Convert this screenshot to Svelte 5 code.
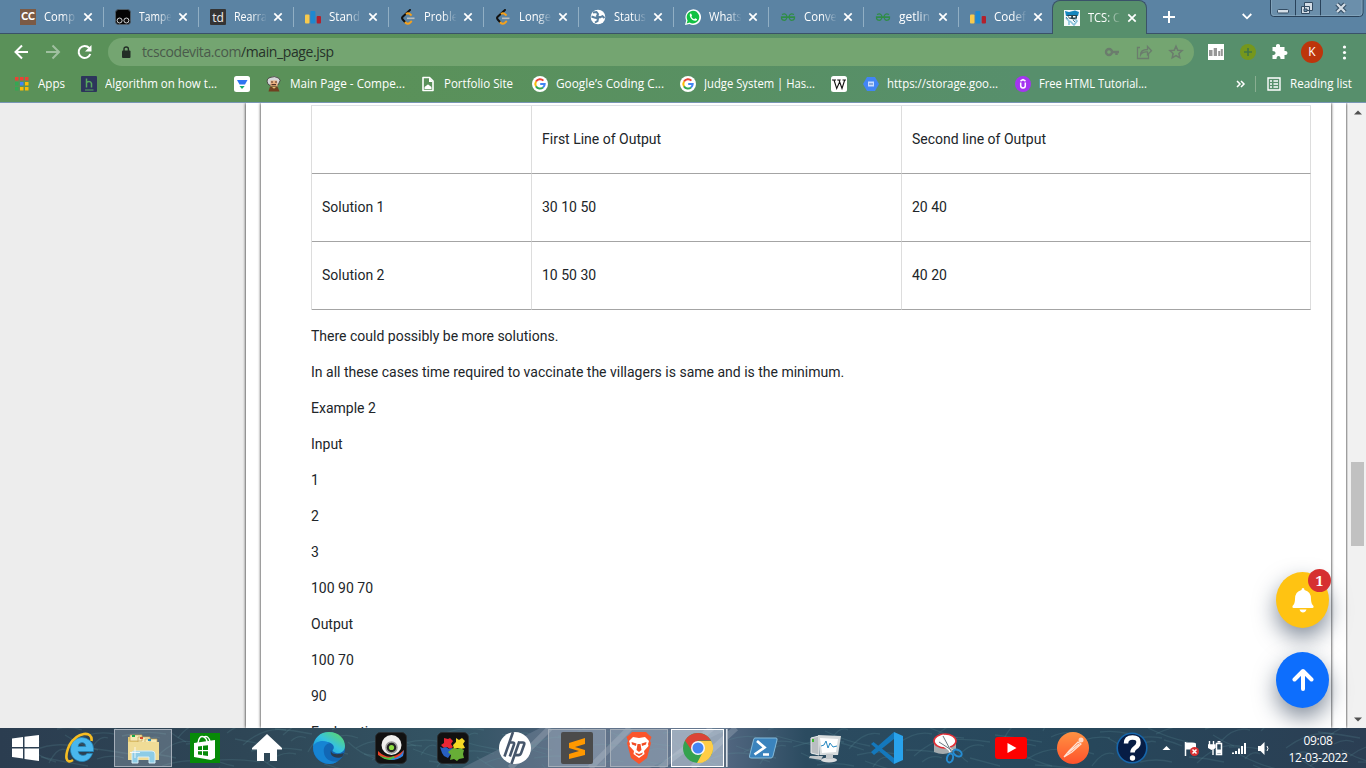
<script>
  const tabs = [
    { icon: 'cc', title: 'Comp', t: 31 },
    { icon: 'tamper', title: 'Tampe', t: 33 },
    { icon: 'td', title: 'Rearra', t: 33 },
    { icon: 'bars', title: 'Stand', t: 31 },
    { icon: 'leet', title: 'Proble', t: 34 },
    { icon: 'leet', title: 'Longe', t: 32 },
    { icon: 'globe', title: 'Status', t: 32 },
    { icon: 'whats', title: 'Whats', t: 33 },
    { icon: 'gfg', title: 'Conve', t: 33 },
    { icon: 'gfg', title: 'getlin', t: 31 },
    { icon: 'bars', title: 'Codef', t: 32 },
    { icon: 'robot', title: 'TCS: C', t: 32, active: true }
  ];

  const bookmarks = [
    { icon: 'apps', label: 'Apps', w: 67, t: 27 },
    { icon: 'h', label: 'Algorithm on how t...', w: 153, t: 112 },
    { icon: 'drop', label: '', w: 32, t: 0 },
    { icon: 'einstein', label: 'Main Page - Compe...', w: 154, t: 115 },
    { icon: 'doc', label: 'Portfolio Site', w: 112, t: 69 },
    { icon: 'google', label: 'Google’s Coding C...', w: 148, t: 108 },
    { icon: 'google', label: 'Judge System | Has...', w: 151, t: 111 },
    { icon: 'wiki', label: '', w: 32, t: 0 },
    { icon: 'cloud', label: 'https://storage.goo...', w: 152, t: 111 },
    { icon: 'udemy', label: 'Free HTML Tutorial...', w: 150, t: 108 }
  ];

  const appDots = ['#ea4335', '#ea4335', '#ea4335', '#34a853', '#4285f4', '#fbbc05', '#34a853', '#fbbc05', '#fbbc05'];

  const rows = [
    ['', 'First Line of Output', 'Second line of Output'],
    ['Solution 1', '30 10 50', '20 40'],
    ['Solution 2', '10 50 30', '40 20']
  ];

  const lines = [
    'There could possibly be more solutions.',
    'In all these cases time required to vaccinate the villagers is same and is the minimum.',
    'Example 2', 'Input', '1', '2', '3', '100 90 70', 'Output', '100 70', '90', 'Explanation'
  ];

  const tasks = [
    'ie', 'explorer', 'store', 'home', 'edge', 'cam', 'puzzle', 'hp', 'sublime',
    'brave', 'chrome', 'powershell', 'monitor', 'vscode', 'snip', 'youtube', 'postman', 'help'
  ];
  const open = { explorer: 'open', sublime: 'open', brave: 'open', chrome: 'open current' };

  const grass = Array.from({ length: 150 }, (_, i) => {
    const x = (i * 97) % 1366;
    const y = (i * 31) % 40;
    const dx = 14 + ((i * 13) % 38);
    const dy = ((i * 17) % 36) - 18;
    return `M${x} ${y}q${dx / 2} ${dy - 4} ${dx} ${dy}`;
  });
</script>

{#snippet small(name)}
  <svg class="fav" viewBox="0 0 16 16" width="16" height="16">
    {#if name === 'cc'}
      <rect width="16" height="16" fill="#7b5a45" /><text x="8" y="11.3" text-anchor="middle" font-size="10.5" font-weight="900" font-family="Lato" fill="#fff">CC</text>
    {:else if name === 'tamper'}
      <rect x=".5" y=".5" width="15" height="15" rx="3" fill="#050505" stroke="#4c5b66" /><circle cx="4.600" cy="11.500" r="2.500" fill="#111" stroke="#d5d8da" /><circle cx="11.400" cy="11.500" r="2.500" fill="#111" stroke="#d5d8da" />
    {:else if name === 'td'}
      <rect width="16" height="16" rx="1" fill="#343434" /><text x="8" y="12.5" text-anchor="middle" font-size="12" font-family="Noto Sans" fill="#e6e6e6">td</text>
    {:else if name === 'bars'}
      <rect y="5.5" width="4.5" height="9" rx="1" fill="#f8ca4d" /><rect x="5.4" y="2" width="5" height="12.5" rx="1" fill="#1e88d0" /><rect x="11.7" y="7" width="4.3" height="7.5" rx="1" fill="#b3202c" />
    {:else if name === 'leet'}
      <path d="M10 1 2.700 7.700q-1.300 1.400 0 2.800L5 13" fill="none" stroke="#111" stroke-width="2" stroke-linecap="round" /><path d="M5 13q2.500 3 5 .8l1.800-1.700M6 5.200q2-1.800 4 0l1.600 1.400" fill="none" stroke="#f5a11c" stroke-width="2" /><path d="M7 9.300h7.500" stroke="#b8bec1" stroke-width="1.600" />
    {:else if name === 'globe'}
      <circle cx="8" cy="8" r="7.300" fill="#fff" /><path d="M3 3.500 6.500 3l1.500 2-1 2 3 1.500 2.500-1.300L14.500 9M1.500 7.500l3 1 3.500 1-.5 2.500L5 13.500" fill="none" stroke="#597f9e" stroke-width="2" />
    {:else if name === 'whats'}
      <path d="M0 16 1.200 11.500A7.800 7.800 0 1 1 4.500 15Z" fill="#fff" /><path d="m1.600 14.400 1-3A6.300 6.300 0 1 1 4.700 13.500Z" fill="#12c143" /><path d="M5.300 4.500c-1.700 1.600.8 7.300 5.200 7.300 1.500-.2 1.800-1.500 1.300-1.900l-1.700-.7-.9 1c-1.400-.4-2.300-1.400-2.800-2.500l.6-1-.7-1.900Z" fill="#fff" />
    {:else if name === 'gfg'}
      <path d="M2 5.500q4.500-1.800 5 2.500-.7 3.800-3.500 3.200Q1.500 11 1.500 8.200h13q0 2.800-2 3Q9.700 11.800 9 8q.5-4.300 5-2.500" fill="none" stroke="#2f8d46" stroke-width="1.300" /><path d="M1 8.200h14" stroke="#2f8d46" stroke-width="1.300" />
    {:else if name === 'robot'}
      <path fill="#f7fafb" d="M0 0h16v16H0z" /><path d="m1 1 4 1 6-1.500 4 1.500-1 4H2Z" fill="#1685bd" /><path d="M3 5h10v3.500l-3 1-5-1Z" fill="#29454f" /><path d="M4.500 6h2.700v1.500H4.500zm4.500 0h2.500v1.500H9z" fill="#fff" /><path d="m2 8 3 3v4M11 9l2 2-3 4-4-4" fill="none" stroke="#8bc3dc" stroke-width="1.700" /><path d="m2 7 1.500 2M9 10l2 2" stroke="#397a94" />
    {:else if name === 'apps'}
      {#each appDots as c, i}
        <rect x={1 + (i % 3) * 5} y={1 + Math.floor(i / 3) * 5} width="3.5" height="3.5" fill={c} />
      {/each}
    {:else if name === 'h'}
      <rect width="16" height="16" rx="1" fill="#2d355b" /><path d="M5.500 2.500v9M5.500 7q.5-1.500 2.500-1.500t2.500 2v4" fill="none" stroke="#57a85e" stroke-width="1.500" /><path d="M4 14h8.500" stroke="#57a85e" />
    {:else if name === 'drop'}
      <rect width="16" height="16" rx="2.500" fill="#fff" /><path d="M3 4h10.500L11 8.500H5.500Z" fill="#2e74f2" /><path d="M5.500 10h5.200L8 13Z" fill="#16aa6d" />
    {:else if name === 'einstein'}
      <path d="M2 8Q-.5 3 4 1.500 8.500-.5 12.500 2q3 2 .5 5l-1 2H3Z" fill="#d6d8da" stroke="#3a3433" stroke-width=".8" /><path d="M4.500 4.500H11l.7 6H4.500Z" fill="#e9ad7e" /><path d="M5 6h2m2 0h2M5.500 8.600H10" stroke="#503126" stroke-width="1.200" /><path d="M2.500 15.500 4 10.500h7.500l2 5Z" fill="#704020" /><path d="m6 11 2 1.800 2-1.800" fill="#e9bd75" />
    {:else if name === 'doc'}
      <path d="M3 1.500h6.500L13 5v9.500H3Z" fill="none" stroke="#fff" stroke-width="1.600" stroke-linejoin="round" /><path d="M9 1.500V6h4M4.500 13v-1.500q.2-1.200 1.500-1.500 2-3 4 0 1.300.3 1.500 1.500V13Z" fill="#fff" />
    {:else if name === 'google'}
      <circle cx="8" cy="8" r="8" fill="#fff" /><g fill="none" stroke-width="2"><path d="M11.400 4.600A4.700 4.700 0 0 0 4 5.600" stroke="#ea4335" /><path d="M4 5.600a4.700 4.700 0 0 0 0 4.800" stroke="#fbbc05" /><path d="M4 10.400a4.700 4.700 0 0 0 7 1.100" stroke="#34a853" /><path d="M11 11.500A4.600 4.600 0 0 0 12.700 8H8.200" stroke="#4285f4" /></g>
    {:else if name === 'wiki'}
      <rect width="16" height="16" rx="2.500" fill="#fff" /><path d="M1 4h4M6.200 4h3.500M11.500 4H15M3 4l2.700 8.500L8.600 6M8 4l3 8.500L13.700 4" fill="none" stroke="#111" stroke-width="1.100" />
    {:else if name === 'cloud'}
      <path d="M4 1h8l4 7-4 7H4L0 8Z" fill="#4285f4" /><path d="M5 5.500h6v5H5Z" fill="#c9dcff" /><path d="M6 8h4" stroke="#4776bd" />
    {:else if name === 'udemy'}
      <circle cx="8" cy="8" r="8" fill="#a435f0" /><path d="M5.500 5 8 3.500 10.500 5M5.700 6.500v3.300Q5.700 12 8 12t2.300-2.200V6.500" fill="none" stroke="#fff" stroke-width="1.500" />
    {/if}
  </svg>
{/snippet}

{#snippet task(name)}
  <svg viewBox="0 0 32 32" width="32" height="32">
    {#if name === 'ie'}
      <path d="M5.500 17.500a11.500 11.500 0 0 1 23-1v3H13q1 4 5 4 3-.2 4-2h5.500C25.500 27 21.500 29.500 17 29.500c-6.500 0-11.500-5-11.500-12ZM13 14.500h8q-.7-4-4-4T13 14.500Z" fill="#49b7ee" stroke="#2386bc" stroke-width=".7" /><path d="M26.500 9C28-2 12 0 4.500 13-.5 24 .5 33 8 28" fill="none" stroke="#f6bd23" stroke-width="2.600" />
    {:else if name === 'explorer'}
      <path d="M1 5h10l2 3h17v20H1Z" fill="#e7cc75" /><path d="M3 3h12v6H3zM11 5h12v6H11zM18 7h12v5H18z" fill="#f6e9b5" stroke="#c5a550" stroke-width=".7" /><path d="M5 3h3v2H5z" fill="#18a94b" /><path d="M13 5h3v2h-3z" fill="#d84b2d" /><path d="M21 7h3v2h-3z" fill="#228fc2" /><path d="M1 10h31v18H1Z" fill="#f0dc96" /><path d="M5 31V21q0-2 2-2h18q3 0 3 3v9h-6v-6H11v6Z" fill="#8dcce6" stroke="#d7eef7" /><path d="M8 15v11M3 20.500h10" stroke="#fff" stroke-width=".8" />
    {:else if name === 'store'}
      <path fill="#078a08" d="M1 1h30v30H1z" /><path d="m5 11 21-3v18l-4 2-17-3Z" fill="#fff" /><path d="M9 11q1-8 6-6 3 2 3 5M15 5q4-2 6 4" fill="none" stroke="#fff" stroke-width="1.500" /><path d="m9 14.500 4-.5V18H9Zm5-.7 5-.6V18h-5Zm-5 5.500h4v3.700L9 22.500Zm5 0h5V24l-5-.7Z" fill="#078a08" />
    {:else if name === 'home'}
      <path d="M16 2 1 16v1.500h5V29h7v-8h6v8h7V17.500h5V16Z" fill="#fff" />
    {:else if name === 'edge'}
      <defs><linearGradient id="eg" x1="0" y1="1" x2="1"><stop offset="0" stop-color="#0f8ddc" /><stop offset=".5" stop-color="#35c1e1" /><stop offset="1" stop-color="#65dd52" /></linearGradient></defs>
      <circle cx="16" cy="16" r="16" fill="#1267b5" /><path d="M0 15C1 6 7 0 16 0c10 0 16 7 16 14 0 6-6 9-11 6-2-1-1.500-2-.5-3C22 14 19 10 13 10 7 9 1 12 0 15Z" fill="url(#eg)" /><path d="M0 15c2-6 10-8 17-4-5 1-7 5-6 10 1 7 9 10 14 8-8 7-25 1-25-14Z" fill="#1684d3" /><path d="M19 16c-3 5 2 8 12 5l-1.500 3.500C24 28 14 24 19 16Z" fill="#2a3a4c" />
    {:else if name === 'cam'}
      <rect x=".5" y=".5" width="31" height="31" rx="5" fill="#111" stroke="#292e31" /><path d="M3 19q12 12 26-1l-1 5q-11 9-25 0Z" fill="#ed3f25" /><path d="M4 23q9 5 15 1l1 3q-9 3-16-4Z" fill="#46c445" /><path d="M16 27q9-1 13-9l-1 6q-5 4-12 4" fill="#3481df" /><circle cx="16.500" cy="13" r="10" fill="#f0f0ee" /><circle cx="16.500" cy="15.500" r="5.500" fill="#222" stroke="#999" stroke-width="1.500" /><circle cx="16.500" cy="15.500" r="2.600" fill="#8ddf42" />
    {:else if name === 'puzzle'}
      <rect x=".5" y=".5" width="31" height="31" rx="5" fill="#111" stroke="#292e31" /><path d="m7 6 4 1 2-1 3 3-2 3 2 3-3 2-3-2-3 1-3-3 3-2Z" fill="#e92634" /><path d="m19 6 3 2 3-2 3 3-2 3 2 4-4 1-3-1-4 1-1-4 3-3Z" fill="#f5d824" /><path d="m3 15 3 1 3-1 3 2 3-1 1 5-3 2-2 3-4-2-2-3Z" fill="#275fc1" /><path d="m16 16 4 1 3-1 4 2-1 4 1 4-5 1-2 2-3-2-4 1 1-5-3-3Z" fill="#67ae36" />
    {:else if name === 'hp'}
      <circle cx="16" cy="16" r="16" fill="#fff" /><path d="M14 0 5.500 24.500M10.500 10.500h3q2.200 0 1.400 2.200L10.800 24.500M20.300 9.500 12.400 32M19.700 10.500h4q2.200 0 1.400 2.200l-3 8.400q-.7 2-2.800 2H16" fill="none" stroke="#46566b" stroke-width="2.600" />
    {:else if name === 'sublime'}
      <rect width="32" height="32" rx="2" fill="#4b4b4b" /><path d="m8 11 16-5v6l-10 3 10 3v5L8 27v-5l10-3-10-3Z" fill="#ff9800" />
    {:else if name === 'brave'}
      <path d="m9 0-3 3-2.500 2L5 9l-1 2 4 15 8 6 8-6 4-15-1-2 1.500-4L26 3l-3-3Z" fill="#fb542b" /><path d="m10 5-4 4 1 3-.5 2 4.500 5-.5 3 5.500 4 5.500-4-.5-3 4.500-5-.5-2 1-3-4-4-6 1Z" fill="#fff" /><path d="m8.500 10 5 1.500L13 14l-4-1.500Zm15 0-5 1.500.5 2.500 4-1.500ZM14.500 12h3l1 6-2.500 2-2.500-2ZM12 20.500l4 1.500 4-1.500-1 2-3 1.500-3-1.500Z" fill="#f24c24" />
    {:else if name === 'chrome'}
      <circle cx="16" cy="16" r="15" fill="#34a24f" /><path d="M3 8.500A15 15 0 0 1 29 8.500H16L10 19Z" fill="#db4437" /><path d="M29.300 9A15 15 0 0 1 15 31l6.500-12L16 9Z" fill="#ffcd46" /><circle cx="16" cy="16" r="7" fill="#f5f7fc" /><circle cx="16" cy="16" r="5.500" fill="#4285f4" />
    {:else if name === 'powershell'}
      <path d="M8 6h21q1.500 0 1 2l-4 16q-.5 2-2 2H4q-2 0-1.500-2L6.500 8q.3-2 1.500-2Z" fill="#3a83bd" stroke="#83b9d8" /><path d="m10 9 7.500 6.500L7.500 22.500M16 22.500h6" fill="none" stroke="#fff" stroke-width="2.700" />
    {:else if name === 'monitor'}
      <path d="m2 6 8-2v19l-8-2Z" fill="#b9bec1" stroke="#eceeee" /><path d="M9 3l23 1-3 19H11Z" fill="#d8dcdd" /><path d="m11 6 18 1-2 13-14 1Z" fill="#fff" /><path d="m12 14 3-1 2-4 2 7 2-5 3 4 4-1" fill="none" stroke="#2688c1" /><ellipse cx="20" cy="28" rx="8" ry="2.500" fill="#d8dbdd" /><path d="M17 22h7v5h-7zM1 24l13 0-2 4-12-2Z" fill="#c3c8cb" /><path d="M4 7v3" stroke="#42bb31" stroke-width="2" />
    {:else if name === 'vscode'}
      <path d="m0 12 2.500-2L23 26v6L0 12ZM0 20l23-20v7L3 23Z" fill="#1478bc" /><path d="m23 0 9 4v24l-9 4Z" fill="#28a2ec" />
    {:else if name === 'snip'}
      <path d="M1 9h22v8q-10 8-22 3Z" fill="#a5abae" /><ellipse cx="12" cy="9" rx="11" ry="7" fill="#fff" stroke="#e22e36" stroke-width="1.600" /><path d="m9 3 9 17M5 9l14 10" stroke="#f9fbfc" stroke-width="3" /><path d="m10 4 9 17M6 10l14 9" stroke="#6b7880" /><ellipse cx="17" cy="26" rx="3" ry="4.500" transform="rotate(15 17 26)" fill="none" stroke="#268dd3" stroke-width="2" /><ellipse cx="24.500" cy="21" rx="4.500" ry="3" transform="rotate(30 24.500 21)" fill="none" stroke="#268dd3" stroke-width="2" />
    {:else if name === 'youtube'}
      <rect y="5" width="32" height="22" rx="3" fill="#f00" /><path d="m12.500 11 9 5-9 5Z" fill="#fff" />
    {:else if name === 'postman'}
      <defs><linearGradient id="pm" x2="0" y2="1"><stop stop-color="#ff9242" /><stop offset="1" stop-color="#ff522c" /></linearGradient></defs><circle cx="16" cy="16" r="16" fill="url(#pm)" /><circle cx="24" cy="8" r="2.500" fill="#ffd9c8" /><path d="m7 25 5-6 9-9 3 2-9 8Zm4-4 11-9" fill="none" stroke="#ffe4d6" stroke-width="1.200" />
    {:else if name === 'help'}
      <circle cx="16" cy="16" r="14.800" fill="#071d45" stroke="#1767ac" stroke-width="1.600" /><path d="M10 11.500q0-6 6.500-6t6 5q0 3-3 5t-3 5" fill="none" stroke="#fff" stroke-width="4.500" /><circle cx="16.500" cy="26" r="2.700" fill="#fff" />
    {/if}
  </svg>
{/snippet}

<div class="screen">
  <header>
    <div class="strip">
      {#each tabs as tab, i}
        <div class="tab" class:active={tab.active} class:last={i === 10}>
          {@render small(tab.icon)}
          <svg class="title label" width="34" height="18"><text x="0" y="13" textLength={tab.t} lengthAdjust="spacingAndGlyphs">{tab.title}</text></svg>
          <svg class="close" viewBox="0 0 10 10" width="10" height="10"><path d="m1.300 1.300 7.400 7.400m0-7.400-7.400 7.400" stroke="#fff" stroke-width="1.700" /></svg>
        </div>
      {/each}
      <svg class="plus" viewBox="0 0 12 12" width="12" height="12"><path d="M6 0v12M0 6h12" stroke="#fff" stroke-width="2" /></svg>
      <svg class="chev" viewBox="0 0 10 7" width="10" height="7"><path d="m.7 1 4.300 4.300L9.300 1" fill="none" stroke="#fff" stroke-width="1.800" /></svg>
      <svg class="winctl" viewBox="0 0 94 18" width="94" height="18"><path d="M.5 0v13q0 3.500 3 3.500h86q3.500 0 3.500-3.500V0M25.500 0v16M50.500 0v16" fill="#6b8fab" stroke="#29425a" /><path d="M1.500 0v13q0 2.500 2.500 2.500h85q3 0 3-2.500V0" fill="none" stroke="#8fb0c6" opacity=".6" /><rect x="7.500" y="9.500" width="11" height="3.500" rx="1" fill="#d4dee7" stroke="#334c63" /><path d="M34.500 2.500h8v8h-8zM31.500 6.500h8v7h-8z" fill="#d4dee7" stroke="#334c63" /><path d="M34 9h3v2.500h-3z" fill="#6b8fab" stroke="#334c63" /><path d="m67 4 8 8m0-8-8 8" stroke="#334c63" stroke-width="4.500" /><path d="m67 4 8 8m0-8-8 8" stroke="#d4dee7" stroke-width="2.300" /></svg>
    </div>

    <div class="toolbar">
      <svg class="nav" viewBox="0 0 78 16" width="78" height="16"><path d="M14 8H1.500M8 1.500 1.500 8 8 14.500" fill="none" stroke="#fff" stroke-width="2" /><path d="M32 8h13M38.500 1.500 45 8l-6.500 6.500" fill="none" stroke="#a0c0a0" stroke-width="2" /><path d="M76.300 10A6 6 0 1 1 75.200 4" fill="none" stroke="#fff" stroke-width="2" /><path d="M77.500 1v6.500H71Z" fill="#fff" /></svg>
      <div class="omni">
        <svg viewBox="0 0 10 12" width="10" height="12"><rect x="1" y="4.500" width="8.500" height="7.500" rx="1" fill="#222d26" /><path d="M3 5V3q0-2 2.200-2t2.200 2v2" fill="none" stroke="#222d26" stroke-width="1.400" /></svg>
        <span class="url">tcscodevita.com<b>/main_page.jsp</b></span>
        <svg class="omni-icons" viewBox="0 0 80 16" width="80" height="16"><circle cx="5" cy="8" r="3" fill="none" stroke="#6b7c6d" stroke-width="2.400" /><path d="M8 8h7M12.500 8v3" stroke="#6b7c6d" stroke-width="2.400" /><path d="M36 3.500h-2.500v11h11V10M36.500 11q0-5.500 7-5.500V2.500l4 4.300-4 4V8q-5-.5-7 3Z" fill="none" stroke="#6b7c6d" stroke-width="1.300" /><path d="m72 2.200 1.800 4 4.300.4-3.200 2.900.9 4.300-3.800-2.200-3.800 2.200.9-4.300-3.200-2.900 4.300-.4Z" fill="none" stroke="#6b7c6d" stroke-width="1.500" /></svg>
      </div>
      <svg class="ext" viewBox="0 0 146 22" width="146" height="22"><path fill="#fff" d="M1 3h16v16H1z" /><path d="M2 9h3.500v6H2zM6.700 7H10v8H6.700zM11.200 10h2v5h-2zM13.800 8h2v7h-2z" fill="#969696" /><circle cx="41" cy="11" r="8" fill="#75971d" /><path d="M41 7v8M37 11h8" stroke="#3f7548" stroke-width="1.600" /><path d="M66 6h3.500q-.5-3 2-3t2 3H78v4q3-.5 3 2t-3 2v4h-4q0-3-2-3t-2 3h-4v-4q3 0 3-2t-3-2Z" fill="#fff" transform="translate(-.500 0)" /><circle cx="105" cy="11" r="11" fill="#bd350b" /><text x="105" y="15.300" font-family="Open Sans" font-size="12" text-anchor="middle" fill="#fff">K</text><circle cx="137.500" cy="6" r="1.600" fill="#fff" /><circle cx="137.500" cy="11.500" r="1.600" fill="#fff" /><circle cx="137.500" cy="17" r="1.600" fill="#fff" /></svg>
    </div>

    <div class="bookmarks">
      {#each bookmarks as b}
        <div class="bm" style="width:{b.w}px">
          {@render small(b.icon)}
          {#if b.label}
            <svg class="label" width={b.t + 2} height="18"><text x="0" y="13" textLength={b.t} lengthAdjust="spacingAndGlyphs">{b.label}</text></svg>
          {/if}
        </div>
      {/each}
      <div class="reading">
        <svg viewBox="0 0 50 18" width="50" height="18"><path d="m2 6 3 3-3 3m4-6 3 3-3 3" fill="none" stroke="#fff" stroke-width="1.500" /><path d="M20.500 1v16" stroke="#89ae91" /><path d="M33 3h12v12H33zM35 6h2m1.500 0H43M35 9h2m1.500 0H43M35 12h2m1.500 0H43" fill="none" stroke="#fff" stroke-width="1.400" /></svg>
        <svg class="label" width="64" height="18"><text x="0" y="13" textLength="62" lengthAdjust="spacingAndGlyphs">Reading list</text></svg>
      </div>
    </div>
  </header>

  <main>
    <div class="viewport">
      <div class="outer">
        <div class="inner">
          <table>
            <colgroup><col class="c1" /><col class="c2" /><col class="c3" /></colgroup>
            <tbody>
              {#each rows as row}
                <tr>{#each row as cell}<td>{cell}</td>{/each}</tr>
              {/each}
            </tbody>
          </table>
          {#each lines as line}<p>{line}</p>{/each}
        </div>
      </div>
    </div>
    <div class="scroll">
      <svg viewBox="0 0 8 5" width="8" height="5"><path d="M0 4.500 4 .5l4 4Z" fill="#505050" /></svg>
      <div class="thumb"></div>
      <svg class="down" viewBox="0 0 8 5" width="8" height="5"><path d="M0 .5 4 4.500l4-4Z" fill="#505050" /></svg>
    </div>
    <div class="float bell">
      <svg viewBox="0 0 22 25" width="22" height="25"><path d="M11 0q1.500 0 1.500 2Q19 3.500 19 11q0 5 2.500 7 .5 2-1 2h-19q-1.500 0-1-2Q3 16 3 11q0-7.500 6.500-9 0-2 1.500-2ZM7.500 21.500h7q-1 3-3.500 3t-3.500-3Z" fill="#fff" /></svg>
      <span class="badge">1</span>
    </div>
    <div class="float up">
      <svg viewBox="0 0 22 24" width="22" height="24"><path d="M11 21V4M2.500 11.500 11 3l8.500 8.500" fill="none" stroke="#fff" stroke-width="4" stroke-linecap="round" stroke-linejoin="round" /></svg>
    </div>
  </main>

  <footer>
    <svg class="grass" viewBox="0 0 1366 40" width="1366" height="40">
      <path d="M462 40 540 0h190L650 40Z" fill="#8795a9" opacity=".35" />
      <path d="M510 40 550 0M590 40 630 0M660 40 712 0M692 40l44-40" stroke="#bcc5d0" stroke-width="6" opacity=".28" />
      {#each grass as d}<path {d} fill="none" stroke="#5f929d" stroke-width="1.300" opacity=".22" />{/each}
    </svg>
    <div class="start">
      <svg viewBox="0 0 27 26" width="27" height="26"><path d="m0 3.500 11-1.600V12H0ZM12.500 1.700 27 0v12H12.500ZM0 13.500h11V23.500L0 22Zm12.500 0H27V26l-14.500-2Z" fill="#fff" /></svg>
    </div>
    {#each tasks as name}
      <div class="task {name}"><div class="plate {open[name] ?? ''}">{@render task(name)}</div></div>
    {/each}
    <div class="tray">
      <svg viewBox="0 0 114 20" width="114" height="20"><path d="m2.500 11 4-4 4 4Z" fill="#fff" /><path d="M25.500 3v14" stroke="#fff" stroke-width="1.500" /><path d="M26 3.500h6q3 0 4 1v6H26Z" fill="#fff" /><circle cx="34.500" cy="12.500" r="4.500" fill="#d92f31" /><path d="m32.500 10.500 4 4m0-4-4 4" stroke="#fff" stroke-width="1.500" /><path d="M49.500 2v4M53.500 2v4M48 6h7v2.500L53 10v6" fill="none" stroke="#fff" stroke-width="1.400" /><path d="M48 6h7v3l-3.500 2L48 9Z" fill="#fff" /><path d="M56.500 4.500h5v11h-5zM57.500 2.800h3" fill="none" stroke="#fff" stroke-width="1.500" /><path d="M57 10.500h4v4H57z" fill="#fff" /><path d="M72 13.500h2V15h-2zm3-1.500h2v3h-2zm3-2.500h2V15h-2zm3-2.500h2v8h-2zm3-3h2v11h-2z" fill="#fff" /><path d="M98 7h2.500l4-4v13l-4-4H98Z" fill="#fff" /><path d="M107 7q2 2.500 0 5" fill="none" stroke="#fff" /></svg>
    </div>
    <div class="clock"><span>09:08</span><span>12-03-2022</span></div>
  </footer>
</div>

<style>
  :global(body) { margin: 0; overflow: hidden; }
  .screen { width: 1366px; height: 768px; display: flex; flex-direction: column; overflow: hidden; background: #fff; }
  svg { display: block; flex: none; }

  header { height: 103px; box-sizing: border-box; border-bottom: 1px solid #7896b5; background: linear-gradient(90deg, #5a9159 0, #5a9159 28%, #578f6c 75%); font-family: "Open Sans", sans-serif; color: #fff; flex: none; }
  .strip { height: 34px; box-sizing: border-box; background: #5b83a3; border-bottom: 1px solid #3a5269; display: flex; padding-left: 9px; position: relative; }
  .tab { width: 95px; box-sizing: border-box; height: 33px; padding: 1px 0 0 11px; display: flex; align-items: center; flex: none; position: relative; }
  .tab::after { content: ""; position: absolute; right: 0; top: 7px; width: 1px; height: 20px; background: #91afc4; }
  .tab.last::after { display: none; }
  .title { margin-left: 8px; -webkit-mask-image: linear-gradient(90deg, #000 55%, transparent 96%); mask-image: linear-gradient(90deg, #000 55%, transparent 96%); }
  .close { margin-left: 5px; }
  .active { height: 34px; background: #578f6c; border: 1px solid #3a5269; border-bottom: 0; border-radius: 8px 8px 0 0; padding: 0 0 0 11px; margin-left: -2px; }
  .active::after { display: none; }
  .plus { margin: 11px 0 0 16px; }
  .chev { margin: 13px 0 0 67px; }
  .winctl { margin-left: 18px; }

  .toolbar { height: 36px; display: flex; align-items: center; padding-left: 15px; }
  .nav { margin-left: -1px; margin-right: 1px; }
  .omni { margin-left: 15px; width: 1086px; height: 28px; border-radius: 14px; background: #74a571; display: flex; align-items: center; box-sizing: border-box; padding: 0 10px 0 13px; }
  .url { margin-left: 11px; font-size: 14px; letter-spacing: -.4px; color: #4a5a4b; line-height: 20px; flex: 1; }
  .url b { color: #263229; font-weight: 400; }
  .ext { margin-left: 13px; }

  .bookmarks { height: 28px; display: flex; align-items: center; padding-left: 14px; }
  .bm { display: flex; align-items: center; gap: 8px; flex: none; }
  .label text { font-family: "Open Sans", sans-serif; font-size: 12px; fill: #fff; }
  .reading { margin-left: auto; display: flex; align-items: center; gap: 5px; padding-right: 12px; }

  main { height: 625px; flex: none; display: flex; position: relative; overflow: hidden; font-family: Roboto, sans-serif; font-size: 14px; color: #212529; }
  .viewport { width: 1349px; background: linear-gradient(90deg, #ededed 600px, #fff 600px); overflow: hidden; display: flex; padding-left: 246px; box-sizing: border-box; }
  .outer { width: 1100px; flex: none; background: #fff; padding: 0 15px; box-sizing: border-box; box-shadow: 0 0 3px #000; }
  .inner { height: 625px; box-sizing: border-box; background: #fff; padding: 2px 20px 0 50px; box-shadow: 0 0 3px #000; }
  table { width: 1000px; height: 205px; border-collapse: separate; border-spacing: 0; table-layout: fixed; border-top: 1px solid #dee2e6; border-left: 1px solid #ddd; }
  .c1 { width: 220px; }
  .c2 { width: 370px; }
  td { height: 68px; box-sizing: border-box; padding: 0 10px 2px; border-right: 1px solid #ddd; border-bottom: 1px solid #a4a4a4; }
  p { margin: 16px 0; line-height: 20px; white-space: nowrap; }
  .scroll { width: 17px; background: #f1f1f1; display: flex; flex-direction: column; align-items: center; padding-top: 7px; box-sizing: border-box; }
  .thumb { width: 13px; height: 84px; background: #c1c1c1; margin-top: 347px; }
  .down { margin-top: auto; margin-bottom: 6px; }

  .float { position: absolute; left: 1276px; width: 53px; height: 56px; border-radius: 50%; display: flex; align-items: center; justify-content: center; box-shadow: 0 10px 22px rgba(20, 38, 65, .52); }
  .bell { top: 469px; background: #ffc312; }
  .up { top: 549px; background: #0d6efd; }
  .badge { position: absolute; left: 32px; top: -3px; width: 23px; height: 23px; border-radius: 50%; background: #d63031; color: #fff; font: bold 14px/23px "Noto Serif", "DejaVu Serif", "Liberation Serif", serif; text-align: center; }

  footer { height: 40px; flex: none; display: flex; position: relative; overflow: hidden; background: linear-gradient(90deg, #2b3d50, #2e4656 18%, #345565 34%, #4c5f78 42%, #526781 53%, #2b4b60 59%, #27475b 80%, #2b3e53); }
  .grass { position: absolute; inset: 0; }
  .start { width: 50px; display: flex; align-items: center; justify-content: center; position: relative; }
  .task { width: 62px; flex: none; display: flex; justify-content: center; position: relative; }
  .plate { width: 58px; height: 39px; box-sizing: border-box; display: flex; align-items: center; justify-content: center; }
  .open { margin-top: 1px; border: 1px solid #a4aeb9; background: rgba(210, 220, 230, .26); height: 38px; }
  .current { width: 53px; margin-right: 7px; border-color: #fff; background: rgba(215, 225, 235, .5); box-shadow: 2px 0 0 #5a6c80, 3px 0 0 #d8e0e8, 4px 0 0 #a4afbc; }
  .help { width: 56px; }
  .tray { position: relative; display: flex; align-items: center; padding-top: 2px; }
  .clock { position: relative; margin-left: 13px; width: 62px; display: flex; flex-direction: column; align-items: center; padding-top: 4px; font: 12px/17px "Open Sans", sans-serif; letter-spacing: -.35px; color: #fff; white-space: nowrap; }
</style>
